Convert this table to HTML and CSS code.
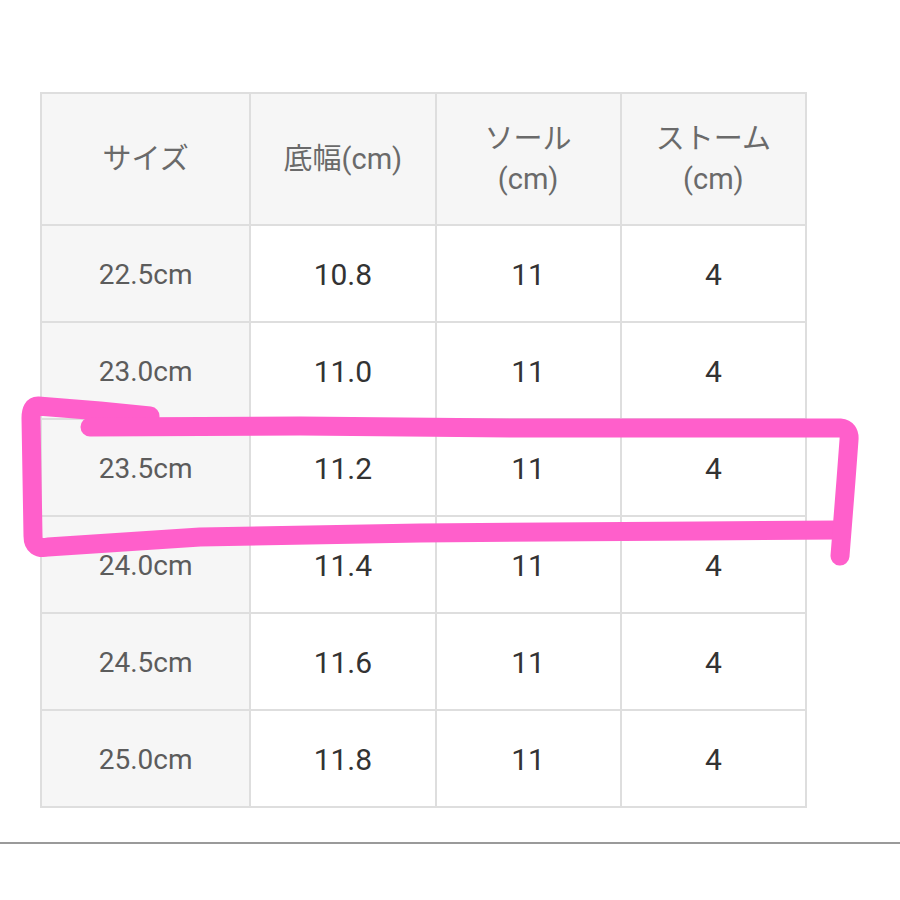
FILE: index.html
```html
<!DOCTYPE html>
<html lang="ja">
<head>
  <meta charset="UTF-8">
  <title>サイズ表</title>
  <link rel="stylesheet" href="styles.css">
</head>
<body>
  <div class="page">
    <table class="size-table">
      <colgroup>
        <col class="col-size">
        <col class="col-num">
        <col class="col-num">
        <col class="col-num">
      </colgroup>
      <thead>
        <tr>
          <th>サイズ</th>
          <th>底幅(cm)</th>
          <th>ソール<br>(cm)</th>
          <th>ストーム<br>(cm)</th>
        </tr>
      </thead>
      <tbody>
        <tr><td class="size">22.5cm</td><td>10.8</td><td>11</td><td>4</td></tr>
        <tr><td class="size">23.0cm</td><td>11.0</td><td>11</td><td>4</td></tr>
        <tr><td class="size">23.5cm</td><td>11.2</td><td>11</td><td>4</td></tr>
        <tr><td class="size">24.0cm</td><td>11.4</td><td>11</td><td>4</td></tr>
        <tr><td class="size">24.5cm</td><td>11.6</td><td>11</td><td>4</td></tr>
        <tr><td class="size">25.0cm</td><td>11.8</td><td>11</td><td>4</td></tr>
      </tbody>
    </table>

    <hr class="divider">

    <!-- hand-drawn marker over the 23.5cm row -->
    <svg class="marker" width="900" height="900" viewBox="0 0 900 900">
      <path d="M150 416 L100 411 L38 406 Q31 406 31 418 L33 536 Q33 550 48 547 L200 537 L420 533 L700 531 L838 530"/>
      <path d="M90 427 L300 426 L520 428 L760 428 L840 428 Q850 429 849 440 L846 480 L840 556"/>
    </svg>
  </div>
</body>
</html>
```

FILE: styles.css
```css
body {
  margin: 0;
  background-color: #fff;
  font-family: Roboto, "Noto Sans CJK JP", sans-serif;
}

.page {
  position: relative;
  width: 900px;
  height: 900px;
  padding-top: 92px;
  box-sizing: border-box;
}

.size-table {
  margin-left: 40px;
  width: 767px;
  table-layout: fixed;
  border-collapse: collapse;
}

.col-size {
  width: 209px;
}

.col-num {
  width: 185px;
}

th, td {
  border: 2px solid #dedede;
  text-align: center;
  vertical-align: middle;
  padding: 0;
}

th {
  height: 130px;
  background-color: #f6f6f6;
  color: #6a6a6a;
  font-weight: normal;
  font-size: 29px;
  line-height: 40px;
}

td {
  height: 93px;
  padding-top: 2px;
  color: #333;
  font-size: 30px;
}

td.size {
  background-color: #f6f6f6;
  color: #5c5c5c;
  font-size: 28px;
}

.divider {
  margin: 34px 0 0;
  border: none;
  border-top: 2px solid #9a9a9a;
}

.marker {
  position: absolute;
  top: 0;
  left: 0;
  pointer-events: none;
}

.marker path {
  fill: none;
  stroke: #ff5fcb;
  stroke-width: 19;
  stroke-linecap: round;
  stroke-linejoin: round;
}
```
